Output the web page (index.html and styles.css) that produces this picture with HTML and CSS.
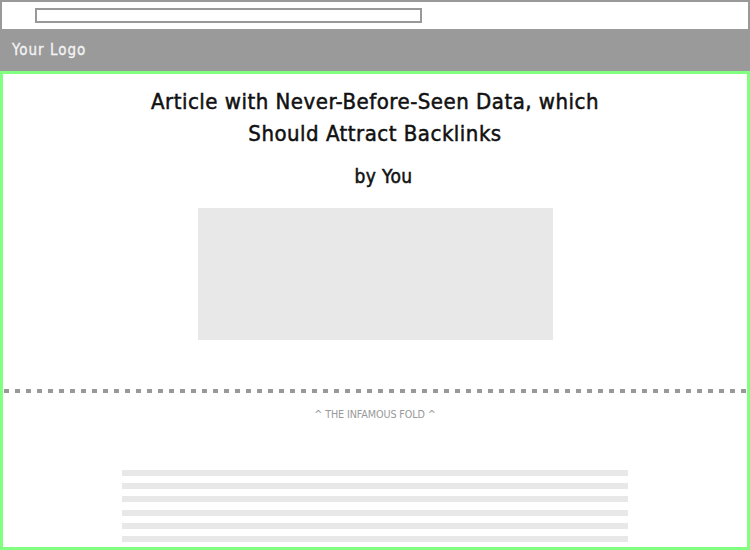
FILE: index.html
```html
<!DOCTYPE html>
<html>
<head>
<meta charset="utf-8">
<link rel="stylesheet" href="styles.css">
</head>
<body>
<div class="browser">
  <div class="chrome"><div class="address"></div></div>
  <div class="header"><span class="logo">Your Logo</span></div>
  <div class="page">
    <h1 class="title">Article with Never-Before-Seen Data, which<br>Should Attract Backlinks</h1>
    <div class="byline">by You</div>
    <div class="hero"></div>
    <div class="fold"></div>
    <div class="fold-label">^ THE INFAMOUS FOLD ^</div>
    <div class="text-lines">
      <div class="line"></div>
      <div class="line"></div>
      <div class="line"></div>
      <div class="line"></div>
      <div class="line"></div>
      <div class="line"></div>
    </div>
  </div>
</div>
</body>
</html>
```
FILE: styles.css
```css
html, body {
  margin: 0;
  padding: 0;
  background: #fff;
}
.browser {
  width: 750px;
  height: 550px;
  display: flex;
  flex-direction: column;
  font-family: "DejaVu Sans Condensed", "DejaVu Sans", sans-serif;
  font-stretch: condensed;
  overflow: hidden;
}
.chrome {
  border: 2px solid #999;
  border-bottom: none;
  padding-left: 33px;
  padding-top: 6px;
  height: 21px;
}
.address {
  width: 383px;
  height: 11px;
  border: 2px solid #999;
}
.header {
  height: 42px;
  background: #9a9a9a;
  display: flex;
  align-items: center;
  padding-left: 12px;
}
.logo {
  color: #f4f4f4;
  font-size: 15px;
  letter-spacing: 1px;
  -webkit-text-stroke: 0.3px #f4f4f4;
}
.page {
  flex: 1;
  border: 3px solid #80ff80;
  display: flex;
  flex-direction: column;
  align-items: center;
  overflow: hidden;
}
.title {
  margin: 12px 0 0;
  font-size: 22px;
  font-weight: normal;
  line-height: 32px;
  letter-spacing: 0.5px;
  text-align: center;
  color: #111;
  -webkit-text-stroke: 0.5px #111;
}
.byline {
  margin-top: 14px;
  padding-left: 17px;
  font-size: 19px;
  line-height: 24px;
  letter-spacing: 0.4px;
  color: #111;
  -webkit-text-stroke: 0.5px #111;
}
.hero {
  margin-top: 20px;
  width: 355px;
  height: 132px;
  background: #e8e8e8;
}
.fold {
  margin-top: 49px;
  align-self: stretch;
  margin-left: 1px;
  height: 4px;
  background: repeating-linear-gradient(to right, #999 0 5.5px, transparent 5.5px 11px);
}
.fold-label {
  margin-top: 15px;
  font-size: 10.7px;
  color: #999;
  letter-spacing: -0.1px;
}
.text-lines {
  margin-top: 49px;
  width: 506px;
  display: flex;
  flex-direction: column;
  gap: 7.2px;
}
.line {
  height: 6px;
  background: #e8e8e8;
}
```
